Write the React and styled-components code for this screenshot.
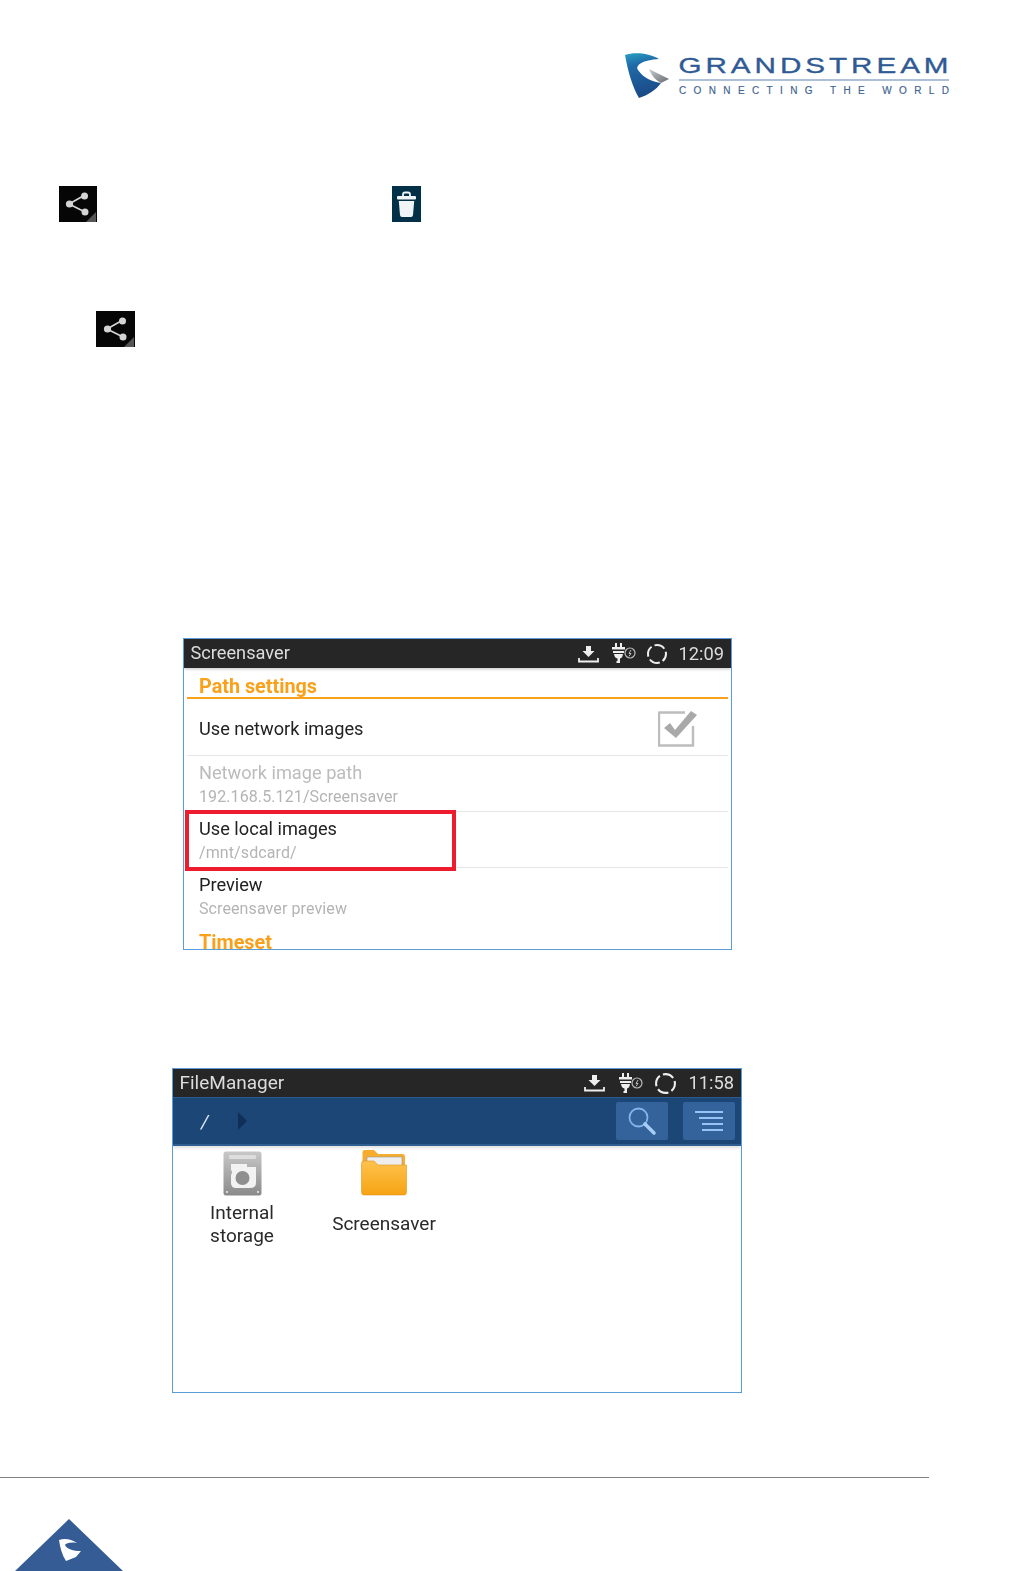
import React from "react";
import styled, { createGlobalStyle } from "styled-components";

const Global = createGlobalStyle`
  html, body { margin: 0; padding: 0; background: #fff; }
  body { font-family: Roboto, "Liberation Sans", sans-serif; }
`;

const Page = styled.div`
  width: 1015px;
  height: 1571px;
  background: #fff;
  overflow: hidden;
  display: flex;
  flex-direction: column;
`;

const Header = styled.header`
  padding: 52px 0 0 624px;
  height: 46px;
  flex: none;
`;

const IconRow = styled.div`
  display: flex;
  flex: none;
  margin-top: ${(p) => p.$top}px;
  padding-left: ${(p) => p.$left}px;
`;

const ShareTile = styled.div`
  width: ${(p) => p.$w}px;
  height: 36px;
  background: #060606;
  position: relative;
  filter: blur(0.4px);
  display: flex;
  align-items: center;
  justify-content: center;
`;

const TrashTile = styled.div`
  width: 29px;
  height: 36px;
  margin-left: 295px;
  background: #023047;
  filter: blur(0.4px);
  display: flex;
  align-items: center;
  justify-content: center;
`;

const Shot = styled.section`
  flex: none;
  box-sizing: border-box;
  margin: ${(p) => p.$top}px 0 0 ${(p) => p.$left}px;
  width: ${(p) => p.$w}px;
  height: ${(p) => p.$h}px;
  border: 1.5px solid #5a9bd8;
  overflow: hidden;
  background: #fff;
  position: relative;
  filter: blur(0.35px);
`;

const StatusBar = styled.div`
  height: ${(p) => p.$h}px;
  background: #262626;
  color: #dcdcdc;
  display: flex;
  align-items: center;
  font-size: ${(p) => p.$fs}px;
  padding-left: 6.5px;
  box-shadow: 0 1px 3px rgba(0,0,0,.25);
  position: relative;
`;

const StatusTitle = styled.span`
  flex: 1;
  padding-bottom: 2px;
`;

const StatusTray = styled.div`
  display: flex;
  align-items: center;
  gap: ${(p) => p.$gap}px;
  padding-right: ${(p) => p.$pr}px;
`;

const Time = styled.span`
  font-size: 18.3px;
  padding-bottom: 1px;
`;

const DownloadSlot = styled.span`
  display: flex;
  margin-right: 3px;
`;

const List = styled.div`
  padding: 0 3px 0 2.5px;
`;

const GroupTitle = styled.div`
  color: #f9a11b;
  font-weight: 700;
  font-size: 19.8px;
  line-height: 24px;
  padding-left: 12.5px;
  height: ${(p) => p.$h}px;
  box-sizing: border-box;
  padding-top: ${(p) => p.$pt}px;
  ${(p) => p.$rule && "border-bottom: 2px solid #f9a11b;"}
`;

const Row = styled.div`
  height: ${(p) => p.$h}px;
  box-sizing: border-box;
  border-bottom: ${(p) => (p.$last ? "0" : "1.5px solid #e6e6e6")};
  padding: ${(p) => p.$pt}px 0 0 12.5px;
  display: flex;
  align-items: ${(p) => (p.$single ? "center" : "flex-start")};
  flex-direction: ${(p) => (p.$single ? "row" : "column")};
  justify-content: ${(p) => (p.$single ? "space-between" : "flex-start")};
  position: relative;
`;

const RowTitle = styled.div`
  font-size: 18.2px;
  line-height: 24px;
  color: ${(p) => (p.$disabled ? "#bcbcbc" : "#222")};
`;

const RowSub = styled.div`
  font-size: 16px;
  line-height: 23px;
  color: #b4b4b4;
  letter-spacing: 0.1px;
`;

const Highlight = styled.div`
  position: absolute;
  left: -2px;
  top: -2px;
  width: 271px;
  height: 61px;
  box-sizing: border-box;
  border: 4.5px solid #ed1c2e;
`;

const BlueBar = styled.div`
  height: 49px;
  background: #1c4675;
  border-top: 1px solid #2c5a8e;
  border-bottom: 2px solid #2f5f90;
  box-sizing: border-box;
  box-shadow: 0 2px 3px rgba(0,0,0,.12);
  display: flex;
  align-items: center;
  padding: 0 6px 0 28px;
  color: #dde8f5;
  position: relative;
`;

const Crumb = styled.span`
  font-size: 19px;
  width: 37px;
  font-style: italic;
`;

const BarButton = styled.div`
  width: 52px;
  height: 38px;
  margin-left: ${(p) => p.$ml}px;
  background: #34629a;
  border-radius: 2px;
  display: flex;
  align-items: center;
  justify-content: center;
`;

const Grow = styled.div`
  flex: 1;
`;

const FileGrid = styled.div`
  display: grid;
  grid-template-columns: 138px 146px;
`;

const FileItem = styled.div`
  display: flex;
  flex-direction: column;
  align-items: center;
  padding-top: ${(p) => p.$pt}px;
`;

const FileLabel = styled.div`
  font-size: 19px;
  line-height: 23px;
  color: #2a2a2a;
  text-align: center;
  margin-top: ${(p) => p.$mt}px;
`;

const FooterRule = styled.div`
  flex: none;
  width: 929px;
  height: 1px;
  margin-top: 84px;
  background: #808080;
`;

const Corner = styled.div`
  flex: none;
  margin: 41px 0 0 14px;
  height: 53px;
`;

const Logo = () => (
  <svg width="330" height="46" viewBox="0 0 330 46">
    <defs>
      <linearGradient id="lg" x1="0" y1="0" x2="0.2" y2="1">
        <stop offset="0" stopColor="#2ba0c4" />
        <stop offset="0.3" stopColor="#1f6aa8" />
        <stop offset="1" stopColor="#1b4a88" />
      </linearGradient>
      <linearGradient id="lg2" x1="0" y1="0" x2="1" y2="1">
        <stop offset="0" stopColor="#c9ccd0" />
        <stop offset="1" stopColor="#666a70" />
      </linearGradient>
    </defs>
    <path d="M1 3 C4 20 9 36 15 46 C24 43 32 38 37 31 C30 30 20 27 14 18 C11 13 19 8 35 7 C25 1 10 0 1 3Z" fill="url(#lg)" />
    <path d="M25 17 L45 27 L37 31 C31 28 28 24 25 17Z" fill="url(#lg2)" />
    <text x="54.5" y="21" fontFamily="'Liberation Sans', sans-serif" fontSize="22.5" fill="#2f5a94" stroke="#2f5a94" strokeWidth="0.35" textLength="274" lengthAdjust="spacingAndGlyphs" letterSpacing="3">GRANDSTREAM</text>
    <rect x="55" y="27.5" width="270" height="1" fill="#5f82ad" />
    <text x="55" y="41.5" fontFamily="'Liberation Sans', sans-serif" fontSize="10" fill="#3c628f" stroke="#3c628f" strokeWidth="0.15" textLength="270" lengthAdjust="spacing">CONNECTING THE WORLD</text>
  </svg>
);

const Fold = styled.svg`
  position: absolute;
  right: 1px;
  bottom: 0;
`;

const ShareIcon = () => (
  <>
    <svg width="28" height="28" viewBox="0 0 28 28">
      <g fill="#d4d4d4" stroke="#d4d4d4">
        <path d="M5 14 L20 5.5 M5 14 L21 22" strokeWidth="1.6" fill="none" />
        <circle cx="5.5" cy="14" r="3.6" stroke="none" />
        <circle cx="20.5" cy="6" r="3.5" stroke="none" />
        <circle cx="21" cy="22" r="3.5" stroke="none" />
      </g>
    </svg>
    <Fold width="10" height="10" viewBox="0 0 10 10">
      <path d="M10 0 V10 H0Z" fill="#555" />
    </Fold>
  </>
);

const TrashIcon = () => (
  <svg width="21" height="27" viewBox="0 0 21 27">
    <path d="M7 5 V3.5 Q7 1.5 9 1.5 H12 Q14 1.5 14 3.5 V5" fill="none" stroke="#f0f4f5" strokeWidth="1.8" />
    <rect x="1" y="5" width="19" height="3.4" rx="1" fill="#f0f4f5" />
    <path d="M2.8 10 H18.2 L17 24 Q16.8 26 15 26 H6 Q4.2 26 4 24Z" fill="#f0f4f5" />
  </svg>
);

const DownloadIcon = () => (
  <svg width="21" height="18" viewBox="0 0 21 18">
    <path d="M8 1 H13 V6 H16.5 L10.5 12 L4.5 6 H8Z" fill="#eee" />
    <path d="M1 13 V16.5 H20 V13" fill="none" stroke="#eee" strokeWidth="1.8" />
  </svg>
);

const PlugIcon = () => (
  <svg width="24" height="21" viewBox="0 0 24 21">
    <path d="M4 0 V4 M9 0 V4" stroke="#eee" strokeWidth="2" />
    <path d="M0 4 H13 V6.5 H0Z M1 8 H12 V10 H1Z" fill="#eee" />
    <path d="M2 11 H11 Q10.5 15 8 15.5 V20 H4.5 V18 H5.5 V15.5 Q2.5 15 2 11Z" fill="#eee" />
    <circle cx="18" cy="10" r="5" fill="none" stroke="#bbb" strokeWidth="1.2" />
    <path d="M19 7 L17 10.5 H19 L17 13.3" fill="none" stroke="#bbb" strokeWidth="1" />
  </svg>
);

const SyncIcon = ({ size }) => (
  <svg width={size} height={size} viewBox="0 0 22 22">
    <circle cx="11" cy="11" r="9" fill="none" stroke="#eee" strokeWidth="2" strokeDasharray="11 3.2" strokeDashoffset="3" />
  </svg>
);

const Tray = ({ time, gap, pr, size }) => (
  <StatusTray $gap={gap} $pr={pr}>
    <DownloadSlot><DownloadIcon /></DownloadSlot>
    <PlugIcon />
    <SyncIcon size={size} />
    <Time>{time}</Time>
  </StatusTray>
);

const CheckSvg = styled.svg`
  margin-right: 30px;
  margin-top: -2px;
`;

const CheckIcon = () => (
  <CheckSvg width="40" height="38" viewBox="0 0 40 38">
    <path d="M1 3.5 H27 M1 2.5 V36.5 H35 V17" fill="none" stroke="#bdbdbd" strokeWidth="2.4" />
    <path d="M6 19 L12 14 L17 21 L33 2 L39 6 L18 29Z" fill="#a9a9a9" />
  </CheckSvg>
);

const SearchIcon = () => (
  <svg width="30" height="30" viewBox="0 0 30 30">
    <circle cx="11.5" cy="11.5" r="9" fill="none" stroke="#82b4ee" strokeWidth="1.8" />
    <path d="M18 18 L27 27" stroke="#a6cdf5" strokeWidth="3.6" strokeLinecap="round" />
  </svg>
);

const MenuIcon = () => (
  <svg width="30" height="22" viewBox="0 0 30 22">
    <path d="M1 2 H29 M5 8 H29 M8 14 H29 M8 20 H29" stroke="#97c3f6" strokeWidth="2.2" />
  </svg>
);

const ArrowIcon = () => (
  <svg width="9" height="18" viewBox="0 0 9 18">
    <path d="M0 0 L9 9 L0 18Z" fill="#0f2f58" />
  </svg>
);

const DriveIcon = () => (
  <svg width="39" height="45" viewBox="0 0 39 45">
    <defs>
      <linearGradient id="dr" x1="0" y1="0" x2="0" y2="1">
        <stop offset="0" stopColor="#c8c8c8" />
        <stop offset="1" stopColor="#8a8a8a" />
      </linearGradient>
    </defs>
    <rect x="0.5" y="0.5" width="38" height="44" rx="2.5" fill="url(#dr)" />
    <rect x="6" y="4" width="27" height="4" rx="1" fill="#ddd" />
    <path d="M8 13 H24 V16 H33 V32 Q33 37 27 37 H13 Q8 37 8 32 V24 Q10 21 8 19Z" fill="#f2f2f2" />
    <circle cx="19.5" cy="27" r="7" fill="#8f8f8f" />
    <circle cx="4" cy="41" r="1" fill="#eee" />
    <circle cx="35" cy="41" r="1" fill="#eee" />
  </svg>
);

const FolderIcon = () => (
  <svg width="46" height="47" viewBox="0 0 46 47">
    <defs>
      <linearGradient id="fo" x1="0" y1="0" x2="0" y2="1">
        <stop offset="0" stopColor="#ffc24d" />
        <stop offset="1" stopColor="#f6a313" />
      </linearGradient>
    </defs>
    <path d="M1.5 12 V3 Q1.5 1 4 1 H13 L17 5 H41 Q44 5 44 8 V16 H1.5Z" fill="#f6ac2c" />
    <rect x="6" y="8" width="35" height="12" fill="#eee" stroke="#999" strokeWidth="0.6" />
    <path d="M0.5 14 Q0.5 12 3 12 H13 L17 16 H45.5 V43 Q45.5 46 43 46 H3 Q0.5 46 0.5 43Z" fill="url(#fo)" stroke="#dd9620" strokeWidth="0.6" />
  </svg>
);

const CornerMark = () => (
  <svg width="110" height="53" viewBox="0 0 110 53">
    <path d="M55 0 L110 53 H0Z" fill="#355c94" />
    <path d="M45 21 C51 19 57 20 63 24 C57 23 52 24 51 26 C53 30 59 32 67 32 L62 38 L52 42 C48 36 46 28 45 21Z" fill="#fff" />
  </svg>
);

export default function App() {
  return (
    <Page>
      <Global />
      <Header>
        <Logo />
      </Header>

      <IconRow $top={88} $left={59}>
        <ShareTile $w={38}>
          <ShareIcon />
        </ShareTile>
        <TrashTile>
          <TrashIcon />
        </TrashTile>
      </IconRow>

      <IconRow $top={89} $left={96}>
        <ShareTile $w={39}>
          <ShareIcon />
        </ShareTile>
      </IconRow>

      <Shot $top={291} $left={183} $w={549} $h={312}>
        <StatusBar $fs={18.2} $h={29}>
          <StatusTitle>Screensaver</StatusTitle>
          <Tray time="12:09" gap={10} pr={7} size={22} />
        </StatusBar>
        <List>
          <GroupTitle $h={31} $pt={7} $rule>Path settings</GroupTitle>
          <Row $h={57} $pt={3} $single>
            <RowTitle>Use network images</RowTitle>
            <CheckIcon />
          </Row>
          <Row $h={56} $pt={5}>
            <RowTitle $disabled>Network image path</RowTitle>
            <RowSub>192.168.5.121/Screensaver</RowSub>
          </Row>
          <Row $h={56} $pt={5}>
            <RowTitle>Use local images</RowTitle>
            <RowSub>/mnt/sdcard/</RowSub>
            <Highlight />
          </Row>
          <Row $h={56} $pt={5} $last>
            <RowTitle>Preview</RowTitle>
            <RowSub>Screensaver preview</RowSub>
          </Row>
          <GroupTitle $h={24} $pt={7}>Timeset</GroupTitle>
        </List>
      </Shot>

      <Shot $top={118} $left={172} $w={570} $h={325}>
        <StatusBar $fs={19} $h={28}>
          <StatusTitle>FileManager</StatusTitle>
          <Tray time="11:58" gap={11} pr={7} size={23} />
        </StatusBar>
        <BlueBar>
          <Crumb>/</Crumb>
          <ArrowIcon />
          <Grow />
          <BarButton $ml={0}><SearchIcon /></BarButton>
          <BarButton $ml={15}><MenuIcon /></BarButton>
        </BlueBar>
        <FileGrid>
          <FileItem $pt={5}>
            <DriveIcon />
            <FileLabel $mt={5}>Internal<br />storage</FileLabel>
          </FileItem>
          <FileItem $pt={3}>
            <FolderIcon />
            <FileLabel $mt={16}>Screensaver</FileLabel>
          </FileItem>
        </FileGrid>
      </Shot>

      <FooterRule />
      <Corner>
        <CornerMark />
      </Corner>
    </Page>
  );
}
